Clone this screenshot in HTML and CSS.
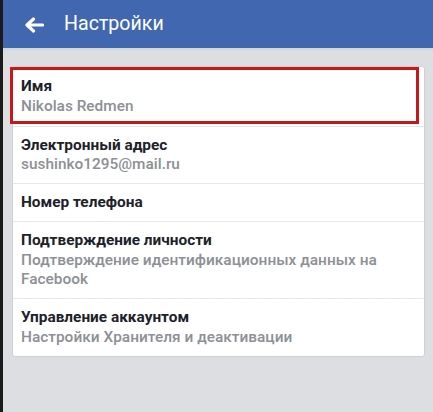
FILE: index.html
```
<!DOCTYPE html>
<html lang="ru">
<head>
<meta charset="utf-8">
<title>Настройки</title>
<link rel="stylesheet" href="styles.css">
</head>
<body>
<div class="strip"></div>
<div class="main">
  <header class="topbar">
    <svg class="back" width="20" height="16" viewBox="0 0 20 16" aria-hidden="true">
      <path d="M18.5 8H3.5M9.5 2L3 8l6.5 6" fill="none" stroke="#fff" stroke-width="3.2" stroke-linecap="round" stroke-linejoin="round"/>
    </svg>
    <h1 class="title">Настройки</h1>
  </header>
  <div class="content">
    <div class="card">
      <div class="row row-first">
        <div class="label">Имя</div>
        <div class="value">Nikolas Redmen</div>
        <div class="highlight"></div>
      </div>
      <div class="row">
        <div class="label">Электронный адрес</div>
        <div class="value">sushinko1295@mail.ru</div>
      </div>
      <div class="row">
        <div class="label">Номер телефона</div>
      </div>
      <div class="row">
        <div class="label">Подтверждение личности</div>
        <div class="value">Подтверждение идентификационных данных на Facebook</div>
      </div>
      <div class="row">
        <div class="label">Управление аккаунтом</div>
        <div class="value">Настройки Хранителя и деактивации</div>
      </div>
    </div>
  </div>
</div>
</body>
</html>
```
FILE: styles.css
```
html, body {
  margin: 0;
  height: 100%;
}
body {
  display: flex;
  background: #dcdee2;
  font-family: Roboto, "Noto Sans", "Liberation Sans", sans-serif;
}
.strip {
  width: 3px;
  flex: none;
  background: #1b1b1b;
}
.main {
  flex: 1;
  display: flex;
  flex-direction: column;
}
.topbar {
  height: 50px;
  background: #4067b0;
  display: flex;
  align-items: center;
  padding-left: 21px;
  box-sizing: border-box;
  border-bottom: 2px solid #d3d6dc;
}
.back {
  display: block;
  margin-top: 1px;
}
.title {
  margin: 0 0 0 20px;
  font-size: 19.6px;
  font-weight: 400;
  color: #fff;
  line-height: 24px;
}
.content {
  padding: 16px 8px 0 9px;
}
.card {
  background: #fff;
  border: 1px solid #cdd0d5;
  border-radius: 3px;
}
.row {
  position: relative;
  padding: 9px 10px 8.5px 8px;
  border-top: 1px solid #e6e7ea;
}
.row:first-child {
  border-top: none;
}
.row-first {
  padding-top: 10px;
  padding-bottom: 9.5px;
}
.label {
  font-size: 15.4px;
  line-height: 19.5px;
  font-weight: 700;
  color: #1d2129;
}
.value {
  font-family: "Roboto Medium", Roboto, "Noto Sans", sans-serif;
  font-size: 15.4px;
  line-height: 19.5px;
  font-weight: 500;
  color: #8d9096;
}
.highlight {
  position: absolute;
  left: -3px;
  right: 5px;
  top: 0;
  bottom: 2px;
  border: 3px solid #c8161d;
}
```
